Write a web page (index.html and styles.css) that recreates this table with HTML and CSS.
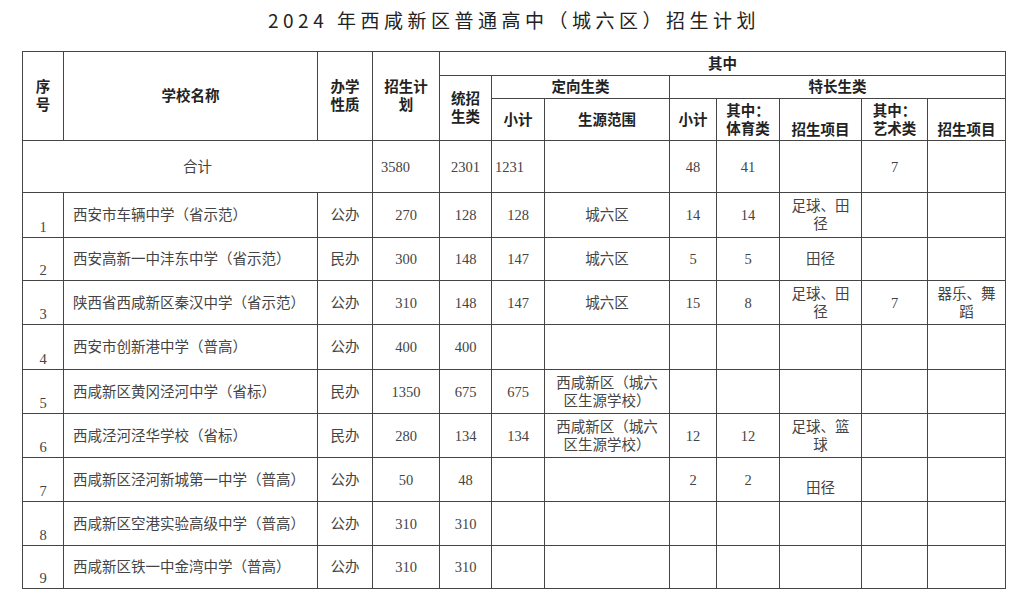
FILE: index.html
```html
<!DOCTYPE html>
<html lang="zh-CN">
<head>
<meta charset="utf-8">
<title>2024年西咸新区普通高中（城六区）招生计划</title>
<link rel="stylesheet" href="styles.css">
</head>
<body>
<h1 class="title">2024 年西咸新区普通高中（城六区）招生计划</h1>
<div class="wrap">
<table class="plan">
  <colgroup>
    <col class="c-seq"><col class="c-name"><col class="c-nature"><col class="c-plan">
    <col class="c-unified"><col class="c-dsub"><col class="c-range"><col class="c-ssub">
    <col class="c-sport"><col class="c-sproj"><col class="c-art"><col class="c-aproj">
  </colgroup>
  <thead>
    <tr class="h1">
      <th rowspan="3">序<br>号</th>
      <th rowspan="3">学校名称</th>
      <th rowspan="3">办学<br>性质</th>
      <th rowspan="3">招生计<br>划</th>
      <th colspan="8">其中</th>
    </tr>
    <tr class="h2">
      <th rowspan="2">统招<br>生类</th>
      <th colspan="2">定向生类</th>
      <th colspan="5">特长生类</th>
    </tr>
    <tr class="h3">
      <th>小计</th>
      <th>生源范围</th>
      <th>小计</th>
      <th>其中：<br>体育类</th>
      <th class="bot">招生项目</th>
      <th>其中：<br>艺术类</th>
      <th class="bot">招生项目</th>
    </tr>
  </thead>
  <tbody>
    <tr class="total">
      <td colspan="3">合计</td>
      <td class="left">3580</td>
      <td>2301</td>
      <td class="left tight">1231</td>
      <td></td>
      <td>48</td>
      <td>41</td>
      <td></td>
      <td>7</td>
      <td></td>
    </tr>
    <tr class="r45">
      <td class="seq">1</td><td class="name">西安市车辆中学（省示范）</td><td>公办</td><td>270</td><td>128</td><td>128</td><td>城六区</td><td>14</td><td>14</td><td>足球、田<br>径</td><td></td><td></td>
    </tr>
    <tr class="r43">
      <td class="seq">2</td><td class="name">西安高新一中沣东中学（省示范）</td><td>民办</td><td>300</td><td>148</td><td>147</td><td>城六区</td><td>5</td><td>5</td><td>田径</td><td></td><td></td>
    </tr>
    <tr class="r44">
      <td class="seq">3</td><td class="name">陕西省西咸新区秦汉中学（省示范）</td><td>公办</td><td>310</td><td>148</td><td>147</td><td>城六区</td><td>15</td><td>8</td><td>足球、田<br>径</td><td>7</td><td>器乐、舞<br>蹈</td>
    </tr>
    <tr class="r45">
      <td class="seq">4</td><td class="name">西安市创新港中学（普高）</td><td>公办</td><td>400</td><td>400</td><td></td><td></td><td></td><td></td><td></td><td></td><td></td>
    </tr>
    <tr class="r44">
      <td class="seq">5</td><td class="name">西咸新区黄冈泾河中学（省标）</td><td>民办</td><td>1350</td><td>675</td><td>675</td><td>西咸新区（城六<br>区生源学校）</td><td></td><td></td><td></td><td></td><td></td>
    </tr>
    <tr class="r44">
      <td class="seq">6</td><td class="name">西咸泾河泾华学校（省标）</td><td>民办</td><td>280</td><td>134</td><td>134</td><td>西咸新区（城六<br>区生源学校）</td><td>12</td><td>12</td><td>足球、篮<br>球</td><td></td><td></td>
    </tr>
    <tr class="r44">
      <td class="seq">7</td><td class="name">西咸新区泾河新城第一中学（普高）</td><td>公办</td><td>50</td><td>48</td><td></td><td></td><td>2</td><td>2</td><td class="low">田径</td><td></td><td></td>
    </tr>
    <tr class="r44">
      <td class="seq">8</td><td class="name">西咸新区空港实验高级中学（普高）</td><td>公办</td><td>310</td><td>310</td><td></td><td></td><td></td><td></td><td></td><td></td><td></td>
    </tr>
    <tr class="r43">
      <td class="seq">9</td><td class="name">西咸新区铁一中金湾中学（普高）</td><td>公办</td><td>310</td><td>310</td><td></td><td></td><td></td><td></td><td></td><td></td><td></td>
    </tr>
  </tbody>
</table>
</div>
</body>
</html>
```
FILE: styles.css
```css
html, body {
  margin: 0;
  padding: 0;
  background: #ffffff;
}

body {
  font-family: "Liberation Serif", "Noto Sans CJK SC", serif;
  color: #444444;
}

.title {
  margin: 0;
  height: 40px;
  line-height: 40px;
  text-align: center;
  font-family: "Noto Sans CJK SC", sans-serif;
  font-weight: 400;
  font-size: 19px;
  letter-spacing: 4.5px;
  padding-left: 4px;
  color: #222222;
}

.wrap {
  padding: 11px 0 0 22px;
}

.plan {
  border-collapse: collapse;
  table-layout: fixed;
  width: 984px;
}

.c-seq { width: 41px; }
.c-name { width: 254px; }
.c-nature { width: 55px; }
.c-plan { width: 67px; }
.c-unified { width: 52px; }
.c-dsub { width: 53px; }
.c-range { width: 125px; }
.c-ssub { width: 47px; }
.c-sport { width: 63px; }
.c-sproj { width: 82px; }
.c-art { width: 66px; }
.c-aproj { width: 78px; }

.plan th,
.plan td {
  border: 1px solid #454545;
  padding: 0 2px;
  font-size: 14.5px;
  line-height: 18px;
  text-align: center;
  vertical-align: middle;
  overflow: hidden;
  white-space: nowrap;
}

.plan th {
  font-weight: bold;
  color: #222222;
}

.h1 { height: 24px; }
.h2 { height: 23px; }
.h3 { height: 42px; }

.plan th.bot {
  vertical-align: bottom;
  padding-bottom: 1px;
}

.total { height: 52px; }
.r43 { height: 43px; }
.r44 { height: 44px; }
.r45 { height: 45px; }

.plan td.left {
  text-align: left;
  padding-left: 8px;
}

.plan td.left.tight {
  padding-left: 3px;
}

.plan td.seq {
  vertical-align: bottom;
  padding-bottom: 1px;
}

.plan td.name {
  text-align: left;
  padding-left: 9px;
}

.plan td.low {
  vertical-align: bottom;
  padding-bottom: 4px;
}
```
